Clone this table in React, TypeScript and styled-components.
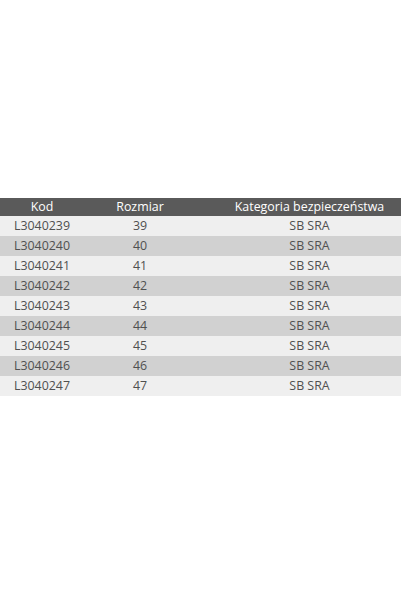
import styled, { createGlobalStyle } from "styled-components";

const GlobalStyle = createGlobalStyle`
  html, body {
    margin: 0;
    padding: 0;
    background: #ffffff;
  }
  body {
    font-family: "Open Sans", "Liberation Sans", sans-serif;
  }
`;

const Page = styled.div`
  width: 401px;
  height: 601px;
  padding-top: 198px;
  box-sizing: border-box;
  background: #fff;
`;

const Table = styled.div`
  display: flex;
  flex-direction: column;
  width: 100%;
`;

const Row = styled.div<{ $kind: "head" | "light" | "dark" }>`
  display: grid;
  grid-template-columns: 84px 112px 1fr;
  height: ${(p) => (p.$kind === "head" ? "18px" : "20px")};
  align-items: center;
  background: ${(p) =>
    p.$kind === "head" ? "#5a5a5a" : p.$kind === "dark" ? "#d1d1d1" : "#efefef"};
  color: ${(p) => (p.$kind === "head" ? "#ffffff" : "#505050")};
  font-size: 12.4px;
  line-height: 18px;
`;

const Cell = styled.div<{ $shift?: number }>`
  text-align: center;
  white-space: nowrap;
  padding-left: ${(p) => (p.$shift ? `${p.$shift}px` : "0")};
`;

const rows = [39, 40, 41, 42, 43, 44, 45, 46, 47];

export default function App() {
  return (
    <>
      <GlobalStyle />
      <Page>
        <Table>
          <Row $kind="head">
            <Cell>Kod</Cell>
            <Cell>Rozmiar</Cell>
            <Cell $shift={22}>Kategoria bezpieczeństwa</Cell>
          </Row>
          {rows.map((size, i) => (
            <Row key={size} $kind={i % 2 === 0 ? "light" : "dark"}>
              <Cell>L30402{size}</Cell>
              <Cell>{size}</Cell>
              <Cell $shift={22}>SB SRA</Cell>
            </Row>
          ))}
        </Table>
      </Page>
    </>
  );
}
